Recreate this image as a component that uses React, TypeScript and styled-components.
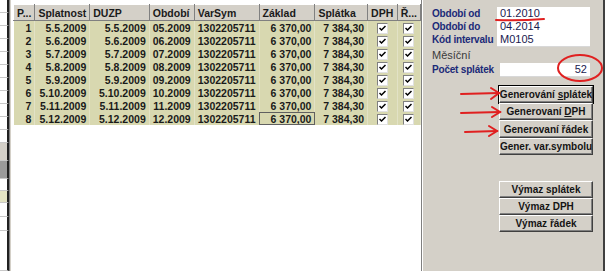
import React from "react";
import styled, { createGlobalStyle } from "styled-components";

const GlobalStyle = createGlobalStyle`
  html, body {
    margin: 0;
    padding: 0;
    background: #ffffff;
  }
  body {
    font-family: Tahoma, "DejaVu Sans", "Liberation Sans", sans-serif;
  }
`;

const Screen = styled.div`
  position: relative;
  display: flex;
  width: 605px;
  height: 271px;
  overflow: hidden;
  background: #ffffff;
`;

const LeftStrip = styled.div`
  width: 9px;
  display: flex;
  flex-direction: column;
  flex-shrink: 0;
`;

const StripCell = styled.div<{ $bg: string; $h: number }>`
  height: ${({ $h }) => $h}px;
  background: ${({ $bg }) => $bg};
  border-right: 2px solid #202020;
  border-bottom: 1px solid #c8c8c8;
  box-sizing: border-box;
`;

const GridPane = styled.div`
  width: 412px;
  flex-shrink: 0;
  border-left: 1px solid #808080;
  box-shadow: inset 1px 0 0 #d4d0c8, inset 2px 0 0 #ffffff;
  padding: 4px 0 0 3px;
  box-sizing: border-box;
  background: #ffffff;
`;

const Table = styled.table`
  border-collapse: collapse;
  table-layout: fixed;
  font-family: "Liberation Sans", Arial, sans-serif;
  font-size: 10.5px;
  font-weight: bold;
  color: #1a1a1a;
`;

const HeadCell = styled.th<{ $w: number }>`
  width: ${({ $w }) => $w}px;
  height: 16px;
  padding: 0 3px;
  box-sizing: border-box;
  text-align: left;
  font-weight: bold;
  background: #d4d0c8;
  border-top: 1px solid #ffffff;
  border-left: 1px solid #ffffff;
  border-right: 1px solid #808080;
  border-bottom: 1px solid #808080;
  white-space: nowrap;
  overflow: hidden;
`;

const Row = styled.tr`
  background: #d8d8b0;
`;

const Cell = styled.td<{ $align?: string; $focus?: boolean }>`
  height: 13px;
  padding: 0 3px;
  text-align: ${({ $align }) => $align || "right"};
  white-space: nowrap;
  overflow: hidden;
  line-height: 12px;
  border-right: 1px solid #e2e2c6;
  outline: ${({ $focus }) => ($focus ? "1px solid #606060" : "none")};
  outline-offset: -1px;
`;

const Check = styled.span`
  display: inline-block;
  width: 9px;
  height: 9px;
  background: #ffffff;
  border-top: 1px solid #808080;
  border-left: 1px solid #808080;
  border-right: 1px solid #e0e0e0;
  border-bottom: 1px solid #e0e0e0;
  vertical-align: middle;
  position: relative;
  svg {
    position: absolute;
    left: 1px;
    top: 1px;
  }
`;

const RightPanel = styled.div`
  flex: 1;
  background: #d4d0c8;
  border-left: 1px solid #808080;
  border-right: 2px solid #404040;
  box-shadow: inset 1px 0 0 #ffffff;
  padding: 7px 0 0 10px;
  box-sizing: border-box;
  display: flex;
  flex-direction: column;
`;

const FormGrid = styled.div`
  display: grid;
  grid-template-columns: 65px 93px;
  grid-auto-rows: 13px;
  align-items: center;
  font-family: "Liberation Sans", Arial, sans-serif;
  font-size: 10.5px;
`;

const Label = styled.div<{ $plain?: boolean }>`
  font-weight: ${({ $plain }) => ($plain ? "normal" : "bold")};
  color: ${({ $plain }) => ($plain ? "#3a3a3a" : "#1b2a78")};
  font-size: ${({ $plain }) => ($plain ? "11px" : "10px")};
  letter-spacing: ${({ $plain }) => ($plain ? "0" : "-0.2px")};
  white-space: nowrap;
`;

const Field = styled.div<{ $right?: boolean; $offset?: number }>`
  height: 13px;
  background: #ffffff;
  border-bottom: 1px solid #d8d8d8;
  padding: 0 3px;
  margin-left: ${({ $offset }) => $offset || 0}px;
  line-height: 13px;
  color: #1a1a50;
  font-size: 11px;
  text-align: ${({ $right }) => ($right ? "right" : "left")};
`;

const Spacer = styled.div<{ $h: number }>`
  height: ${({ $h }) => $h}px;
  flex-shrink: 0;
`;

const ButtonStack = styled.div`
  display: flex;
  flex-direction: column;
  margin-left: 67px;
  width: 94px;
`;

const Button = styled.div<{ $default?: boolean; $h?: number }>`
  height: ${({ $h }) => $h || 17}px;
  box-sizing: border-box;
  display: flex;
  align-items: center;
  justify-content: center;
  background: #d4d0c8;
  font-family: "Liberation Sans", Arial, sans-serif;
  font-size: 10px;
  font-weight: bold;
  color: #141414;
  white-space: nowrap;
  border-top: 1px solid #ffffff;
  border-left: 1px solid #ffffff;
  border-right: 1px solid #404040;
  border-bottom: 1px solid #404040;
  box-shadow: ${({ $default }) =>
    $default
      ? "0 0 0 1px #000000, inset -1px -1px 0 #808080"
      : "inset -1px -1px 0 #808080"};
  u {
    text-decoration: underline;
  }
`;

const Annotations = styled.svg`
  position: absolute;
  left: 0;
  top: 0;
  pointer-events: none;
`;

type RowData = { p: number; spl: string; duzp: string; obd: string };

const rows: RowData[] = [5, 6, 7, 8, 9, 10, 11, 12].map((m, i) => ({
  p: i + 1,
  spl: `5.${m}.2009`,
  duzp: `5.${m}.2009`,
  obd: `${String(m).padStart(2, "0")}.2009`,
}));

const columns = [
  { title: "P...", w: 17 },
  { title: "Splatnost", w: 53 },
  { title: "DUZP", w: 66 },
  { title: "Období", w: 40 },
  { title: "VarSym", w: 61 },
  { title: "Základ", w: 65 },
  { title: "Splátka", w: 58 },
  { title: "DPH", w: 30 },
  { title: "Ř...", w: 17 },
];

const stripCells = [
  ...Array.from({ length: 11 }, () => ({ bg: "#ffffff", h: 13 })),
  { bg: "#d4d0c8", h: 18 },
  { bg: "#9a9a9a", h: 18 },
  { bg: "#ffffff", h: 12 },
  { bg: "#e4e4c4", h: 12 },
  { bg: "#ffffff", h: 14 },
  { bg: "#ffffff", h: 14 },
  { bg: "#ffffff", h: 40 },
];

const Tick = () => (
  <Check>
    <svg width="7" height="7" viewBox="0 0 7 7">
      <path d="M0.5 3 L2.5 5 L6.5 1" stroke="#000" strokeWidth="1.5" fill="none" />
    </svg>
  </Check>
);

export default function App() {
  return (
    <>
      <GlobalStyle />
      <Screen>
        <LeftStrip>
          {stripCells.map((c, i) => (
            <StripCell key={i} $bg={c.bg} $h={c.h} />
          ))}
        </LeftStrip>
        <GridPane>
          <Table>
            <thead>
              <tr>
                {columns.map((c) => (
                  <HeadCell key={c.title} $w={c.w}>
                    {c.title}
                  </HeadCell>
                ))}
              </tr>
            </thead>
            <tbody>
              {rows.map((r) => (
                <Row key={r.p}>
                  <Cell>{r.p}</Cell>
                  <Cell>{r.spl}</Cell>
                  <Cell>{r.duzp}</Cell>
                  <Cell>{r.obd}</Cell>
                  <Cell $align="left">1302205711</Cell>
                  <Cell $focus={r.p === 8}>6 370,00</Cell>
                  <Cell>7 384,30</Cell>
                  <Cell $align="center">
                    <Tick />
                  </Cell>
                  <Cell $align="center">
                    <Tick />
                  </Cell>
                </Row>
              ))}
            </tbody>
          </Table>
        </GridPane>
        <RightPanel>
          <FormGrid>
            <Label>Období od</Label>
            <Field>01.2010</Field>
            <Label>Období do</Label>
            <Field>04.2014</Field>
            <Label>Kód intervalu</Label>
            <Field>M0105</Field>
          </FormGrid>
          <Spacer $h={2} />
          <FormGrid>
            <Label $plain>Měsíční</Label>
            <div />
          </FormGrid>
          <Spacer $h={2} />
          <FormGrid>
            <Label>Počet splátek</Label>
            <Field $right $offset={3}>
              52
            </Field>
          </FormGrid>
          <Spacer $h={10} />
          <ButtonStack>
            <Button $default>
              Generování&nbsp;<u>s</u>plátek
            </Button>
            <Button>
              Generovaní&nbsp;<u>D</u>PH
            </Button>
            <Button $h={18}>Generovaní řádek</Button>
            <Button>Gener. var.symbolu</Button>
          </ButtonStack>
          <Spacer $h={26} />
          <ButtonStack>
            <Button>Výmaz splátek</Button>
            <Button>Výmaz DPH</Button>
            <Button>Výmaz řádek</Button>
          </ButtonStack>
        </RightPanel>
        <Annotations width="605" height="271" viewBox="0 0 605 271">
          <g stroke="#e02020" strokeWidth="2" fill="none" strokeLinecap="round">
            <path d="M496 20 Q520 21 544 19" />
            <ellipse cx="580" cy="68" rx="22" ry="13" />
            <path d="M461 94 L499 93" />
            <path d="M491 88 L499 93 L491 99" />
            <path d="M461 113 L500 112" />
            <path d="M492 107 L500 112 L492 117" />
            <path d="M465 132 L497 131" />
            <path d="M489 126 L497 131 L489 136" />
          </g>
        </Annotations>
      </Screen>
    </>
  );
}
